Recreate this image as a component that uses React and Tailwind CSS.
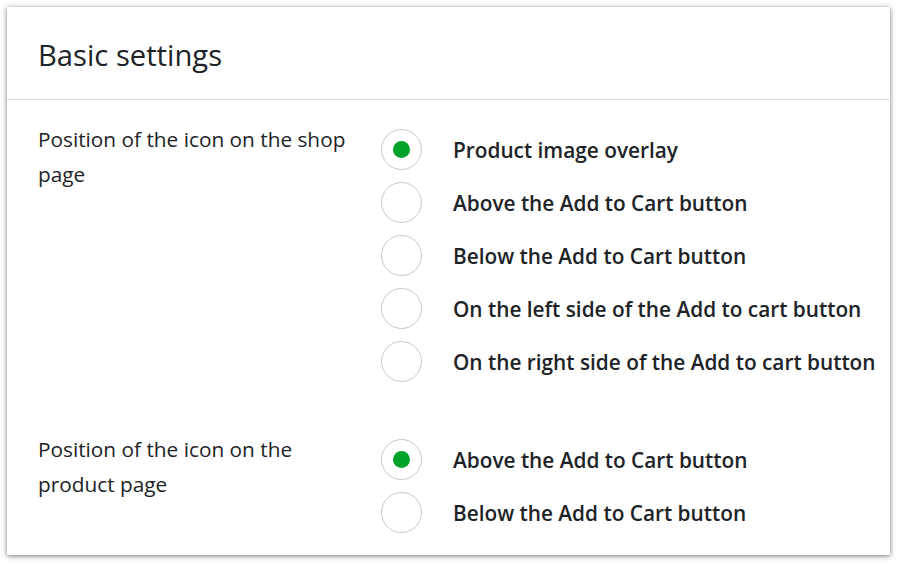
export default function App() {
  const shop = [
    "Product image overlay",
    "Above the Add to Cart button",
    "Below the Add to Cart button",
    "On the left side of the Add to cart button",
    "On the right side of the Add to cart button",
  ];
  const product = ["Above the Add to Cart button", "Below the Add to Cart button"];
  const Radio = ({ checked, label }) => (
    <div className="flex items-center h-[41px]">
      <div className="w-[41px] h-[41px] rounded-full border border-[#c8c8c8] bg-white flex items-center justify-center shrink-0">
        {checked && <div className="w-[17px] h-[17px] rounded-full bg-[#00a32a]" />}
      </div>
      <span className="ml-[31px] pt-[2px] text-[20.8px] font-semibold text-[#1d2327] whitespace-nowrap">{label}</span>
    </div>
  );
  const Section = ({ label, items }) => (
    <div className="flex items-start">
      <div className="w-[343px] shrink-0 pr-[20px]">
        <div className="text-[20.8px] leading-[35px] text-[#1d2327]">{label}</div>
      </div>
      <div className="flex flex-col gap-[12px] mt-[7px]">
        {items.map((t, i) => (
          <Radio key={i} checked={i === 0} label={t} />
        ))}
      </div>
    </div>
  );
  return (
    <div className="w-[898px] h-[564px] bg-white p-[7px] pb-[9px]" style={{ fontFamily: '"Open Sans", sans-serif' }}>
      <div className="w-[883px] h-[548px] bg-white shadow-[0_1px_5px_rgba(0,0,0,0.55)] flex flex-col">
        <div className="h-[93px] border-b border-[#dcdcde] flex items-center px-[31px]">
          <h2 className="text-[29.2px] text-[#1d2327] pt-[5px]">Basic settings</h2>
        </div>
        <div className="px-[31px] pt-[22px] flex flex-col gap-[50px]">
          <Section label="Position of the icon on the shop page" items={shop} />
          <Section label="Position of the icon on the product page" items={product} />
        </div>
      </div>
    </div>
  );
}
